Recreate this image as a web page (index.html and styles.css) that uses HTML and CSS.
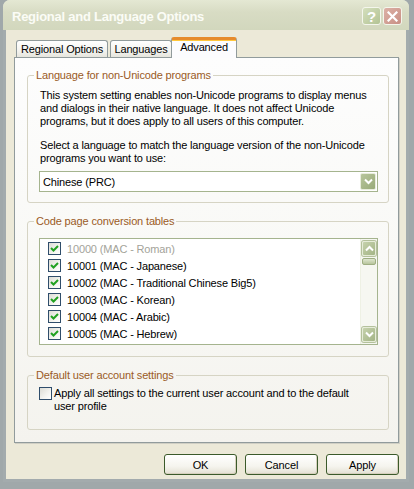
FILE: index.html
```html
<!DOCTYPE html>
<html>
<head>
<meta charset="utf-8">
<link rel="stylesheet" href="styles.css">
</head>
<body>
<div class="window">
  <div class="titlebar">
    <span class="title">Regional and Language Options</span>
    <div class="caption">
      <span class="cbtn help">?</span>
      <span class="cbtn close"><svg width="11" height="11" viewBox="0 0 11 11"><path d="M1.5 1.5 L9.5 9.5 M9.5 1.5 L1.5 9.5" stroke="#fff" stroke-width="2.2" stroke-linecap="square"/></svg></span>
    </div>
  </div>
  <div class="client">
    <div class="tabs">
      <div class="tab t1">Regional Options</div>
      <div class="tab t2">Languages</div>
      <div class="tab active">Advanced</div>
    </div>
    <div class="panel">
      <fieldset class="group g1">
        <legend>Language for non-Unicode programs</legend>
        <p class="para">This system setting enables non-Unicode programs to display menus and dialogs in their native language. It does not affect Unicode programs, but it does apply to all users of this computer.</p>
        <p class="para p2">Select a language to match the language version of the non-Unicode programs you want to use:</p>
        <div class="combo">
          <span class="combo-text">Chinese (PRC)</span>
          <span class="drop"><svg width="9" height="7" viewBox="0 0 9 7"><path d="M1 1.5 L4.5 5 L8 1.5" fill="none" stroke="#fff" stroke-width="2"/></svg></span>
        </div>
      </fieldset>
      <fieldset class="group g2">
        <legend>Code page conversion tables</legend>
        <div class="listbox">
          <div class="items">
            <div class="row disabled"><span class="chk on"><svg width="11" height="11" viewBox="0 0 11 11"><path d="M2 5 L4.5 7.5 L9 3" fill="none" stroke="#21a121" stroke-width="2"/></svg></span><span>10000 (MAC - Roman)</span></div>
            <div class="row"><span class="chk on"><svg width="11" height="11" viewBox="0 0 11 11"><path d="M2 5 L4.5 7.5 L9 3" fill="none" stroke="#21a121" stroke-width="2"/></svg></span><span>10001 (MAC - Japanese)</span></div>
            <div class="row"><span class="chk on"><svg width="11" height="11" viewBox="0 0 11 11"><path d="M2 5 L4.5 7.5 L9 3" fill="none" stroke="#21a121" stroke-width="2"/></svg></span><span>10002 (MAC - Traditional Chinese Big5)</span></div>
            <div class="row"><span class="chk on"><svg width="11" height="11" viewBox="0 0 11 11"><path d="M2 5 L4.5 7.5 L9 3" fill="none" stroke="#21a121" stroke-width="2"/></svg></span><span>10003 (MAC - Korean)</span></div>
            <div class="row"><span class="chk on"><svg width="11" height="11" viewBox="0 0 11 11"><path d="M2 5 L4.5 7.5 L9 3" fill="none" stroke="#21a121" stroke-width="2"/></svg></span><span>10004 (MAC - Arabic)</span></div>
            <div class="row"><span class="chk on"><svg width="11" height="11" viewBox="0 0 11 11"><path d="M2 5 L4.5 7.5 L9 3" fill="none" stroke="#21a121" stroke-width="2"/></svg></span><span>10005 (MAC - Hebrew)</span></div>
          </div>
          <div class="scrollbar">
            <span class="sbtn"><svg width="9" height="7" viewBox="0 0 9 7"><path d="M1 5.5 L4.5 2 L8 5.5" fill="none" stroke="#fff" stroke-width="2"/></svg></span>
            <span class="thumb"></span>
            <span class="track"></span>
            <span class="sbtn"><svg width="9" height="7" viewBox="0 0 9 7"><path d="M1 1.5 L4.5 5 L8 1.5" fill="none" stroke="#fff" stroke-width="2"/></svg></span>
          </div>
        </div>
      </fieldset>
      <fieldset class="group g3">
        <legend>Default user account settings</legend>
        <div class="option">
          <span class="chk"></span>
          <span class="option-text">Apply all settings to the current user account and to the default user profile</span>
        </div>
      </fieldset>
    </div>
    <div class="buttons">
      <button class="btn">OK</button>
      <button class="btn">Cancel</button>
      <button class="btn">Apply</button>
    </div>
  </div>
</div>
</body>
</html>
```
FILE: styles.css
```css
* { box-sizing: border-box; }
html, body {
  margin: 0;
  width: 414px;
  height: 489px;
  overflow: hidden;
}
body {
  background: #a0a8aa;
  font-family: "Liberation Sans", Arial, sans-serif;
  font-size: 11px;
  letter-spacing: -0.15px;
  color: #000;
}
.window {
  margin-left: 3px;
  width: 406px;
  height: 482px;
  display: flex;
  flex-direction: column;
  background: #ece9d8;
  border-radius: 7px 7px 0 0;
}
.titlebar {
  height: 30px;
  flex: none;
  display: flex;
  align-items: center;
  padding: 2px 7px 0 9px;
  border-radius: 7px 7px 0 0;
  background: linear-gradient(#e4e8d3, #d8dcc4 40%, #d2d7bd);
}
.title {
  flex: 1;
  color: #fbfcf6;
  font-weight: bold;
  font-size: 13px;
  letter-spacing: -0.25px;
}
.caption { display: flex; gap: 2px; }
.cbtn {
  width: 19px;
  height: 18px;
  border: 1px solid #f4f6ec;
  border-radius: 3px;
  display: flex;
  align-items: center;
  justify-content: center;
  color: #fff;
  font-weight: bold;
  font-size: 15px;
  letter-spacing: 0;
}
.help { background: linear-gradient(135deg, #d4dfbd, #b3c394); }
.close { background: linear-gradient(135deg, #dcb1a6, #c88f84); }
.client {
  flex: 1;
  display: flex;
  flex-direction: column;
  border: solid #a3abad;
  border-width: 0 3px 3px 3px;
  padding: 7px 7px 0 8px;
}
.tabs {
  display: flex;
  align-items: flex-end;
  height: 20px;
  padding-left: 2px;
  position: relative;
  z-index: 1;
}
.tab {
  height: 17px;
  padding-top: 2px;
  border: 1px solid #919b9c;
  border-bottom: 0;
  border-radius: 3px 3px 0 0;
  background: linear-gradient(#ffffff, #f3f3ef 60%, #e6e5dd);
  line-height: 13px;
  white-space: nowrap;
  text-align: center;
}
.t1 { width: 92px; margin-right: 2px; }
.t2 { width: 62px; }
.active {
  height: 21px;
  width: 66px;
  margin-left: -1px;
  margin-bottom: -1px;
  padding-top: 1px;
  border-top: 3px solid #e68b2c;
  background: #fcfcfe;
  box-shadow: inset 0 1px 0 #ffc73c;
}
.panel {
  height: 386px;
  border: 1px solid #919b9c;
  background: linear-gradient(#fdfdfd, #f9f9f6 50%, #f4f3ee);
  padding: 11px 9px 0 12px;
  box-shadow: 1px 1px 0 #d0cfc4;
}
.group {
  margin: 0;
  border: 1px solid #d6d4c4;
  border-radius: 3px;
  padding: 7px 10px 10px 11px;
  min-width: 0;
}
.group legend {
  padding: 0 2px;
  margin-left: -5px;
  line-height: 13px;
  color: #9a5b26;
}
.g2 { margin-top: 12px; padding-top: 10px; padding-bottom: 11px; }
.g3 { margin-top: 12px; padding-top: 5px; padding-bottom: 16px; }
.para {
  margin: 0;
  line-height: 13px;
  padding-left: 1px;
}
.p2 { margin-top: 11px; }
.combo {
  margin-top: 6px;
  height: 21px;
  border: 1px solid #a5b48e;
  background: #fff;
  display: flex;
  align-items: center;
  padding: 1px;
}
.combo-text { flex: 1; padding-left: 2px; }
.drop {
  width: 16px;
  height: 17px;
  border: 1px solid #e8eddc;
  border-radius: 2px;
  background: linear-gradient(135deg, #b8c69c, #98aa78);
  display: flex;
  align-items: center;
  justify-content: center;
}
.listbox {
  height: 107px;
  border: 1px solid #a5b48e;
  background: #fff;
  display: flex;
}
.items { flex: 1; padding: 1px 0 0 8px; }
.row {
  height: 17px;
  display: flex;
  align-items: center;
  gap: 6px;
  white-space: nowrap;
}
.row.disabled { color: #a3a39a; }
.chk {
  width: 13px;
  height: 13px;
  flex: none;
  border: 1px solid #2f4d6b;
  background: linear-gradient(135deg, #dcdcd5, #f4f4f0 60%, #ffffff);
  display: flex;
  align-items: center;
  justify-content: center;
}
.scrollbar {
  width: 17px;
  display: flex;
  flex-direction: column;
  padding: 2px 1px 2px 1px;
  background: #f6f7f1;
  border-left: 1px solid #eef1e4;
}
.sbtn {
  height: 15px;
  border: 1px solid #e6ecd8;
  border-radius: 2px;
  background: linear-gradient(135deg, #c6d2ad, #a3b485);
  box-shadow: 0 0 0 1px #b4c19c;
  display: flex;
  align-items: center;
  justify-content: center;
}
.thumb {
  height: 7px;
  margin-top: 2px;
  border: 1px solid #9eae82;
  border-radius: 2px;
  background: linear-gradient(#dfe6cf, #b7c59c);
}
.track { flex: 1; }
.option {
  display: flex;
  align-items: flex-start;
  gap: 2px;
}
.option-text {
  width: 305px;
  line-height: 13px;
}
.buttons {
  margin-top: 11px;
  display: flex;
  justify-content: flex-end;
  gap: 8px;
}
.btn {
  width: 73px;
  height: 21px;
  padding: 0;
  font-family: "Liberation Sans", Arial, sans-serif;
  font-size: 11px;
  letter-spacing: -0.15px;
  color: #000;
  border: 1px solid #3b5a2a;
  border-radius: 3px;
  background: linear-gradient(#ffffff, #f5f4ee 60%, #e3e0d2);
  box-shadow: inset -1px -1px 0 #d6d0bd;
}
```
